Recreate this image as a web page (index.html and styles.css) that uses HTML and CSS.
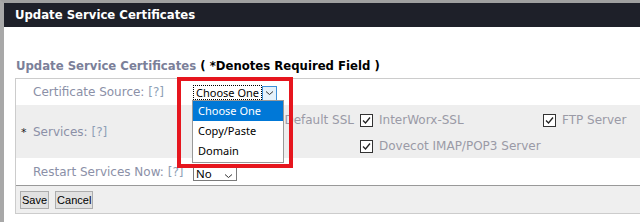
FILE: index.html
```html
<!DOCTYPE html>
<html lang="en">
<head>
    <meta charset="UTF-8">
    <title>Update Service Certificates</title>
    <link rel="stylesheet" href="styles.css">
</head>
<body>
    <div class="frame">
        <div class="titlebar">Update Service Certificates</div>

        <div class="content">
            <h2 class="section-title">Update Service Certificates <span class="note">( *Denotes Required Field )</span></h2>

            <div class="box">
                <div class="form-row row-source">
                    <div class="label">Certificate Source: <span class="help">[?]</span></div>
                    <div class="value">
                        <div class="select-wrap">
                            <div class="select open">
                                <span class="select-text">Choose One</span>
                                <span class="select-arrow">
                                    <svg width="9" height="6" viewBox="0 0 9 6"><path d="M1 1.5 L4.5 4.5 L8 1.5" fill="none" stroke="#333" stroke-width="1"/></svg>
                                </span>
                            </div>
                            <ul class="options">
                                <li class="selected">Choose One</li>
                                <li>Copy/Paste</li>
                                <li>Domain</li>
                            </ul>
                        </div>
                    </div>
                </div>

                <div class="form-row row-services alt">
                    <div class="label"><span class="req">*</span>Services: <span class="help">[?]</span></div>
                    <div class="value">
                        <div class="services">
                            <label class="check first"><span class="box-check"><svg width="11" height="11" viewBox="0 0 11 11"><path d="M2 5.5 L4.5 8 L9 2.5" fill="none" stroke="#222" stroke-width="1.3"/></svg></span>Default SSL</label>
                            <label class="check"><span class="box-check"><svg width="11" height="11" viewBox="0 0 11 11"><path d="M2 5.5 L4.5 8 L9 2.5" fill="none" stroke="#222" stroke-width="1.3"/></svg></span>InterWorx-SSL</label>
                            <label class="check"><span class="box-check"><svg width="11" height="11" viewBox="0 0 11 11"><path d="M2 5.5 L4.5 8 L9 2.5" fill="none" stroke="#222" stroke-width="1.3"/></svg></span>FTP Server</label>
                            <span class="check"></span>
                            <label class="check"><span class="box-check"><svg width="11" height="11" viewBox="0 0 11 11"><path d="M2 5.5 L4.5 8 L9 2.5" fill="none" stroke="#222" stroke-width="1.3"/></svg></span>Dovecot IMAP/POP3 Server</label>
                        </div>
                    </div>
                </div>

                <div class="form-row row-restart">
                    <div class="label">Restart Services Now: <span class="help">[?]</span></div>
                    <div class="value">
                        <div class="select small">
                            <span class="select-text">No</span>
                            <svg width="9" height="6" viewBox="0 0 9 6"><path d="M1 1.5 L4.5 4.5 L8 1.5" fill="none" stroke="#333" stroke-width="1"/></svg>
                        </div>
                    </div>
                </div>

                <div class="actions">
                    <button class="btn">Save</button>
                    <button class="btn">Cancel</button>
                </div>
            </div>
        </div>
    </div>

    <!-- highlight drawn round the open dropdown -->
    <div class="highlight"></div>
</body>
</html>
```

FILE: styles.css
```css
body {
    margin: 0;
    width: 640px;
    height: 222px;
    overflow: hidden;
    background-color: #fff;
    font-family: "DejaVu Sans", Verdana, sans-serif;
    font-size: 12px;
    position: relative;
}
.frame {
    border-top: 3px solid #a0a0a0;
    border-left: 4px solid #a8a8a8;
    height: 219px;
}
.titlebar {
    background-color: #1e2029;
    color: #fff;
    font-weight: bold;
    font-size: 11.7px;
    height: 24px;
    line-height: 24px;
    padding-left: 11px;
}
.content {
    padding-left: 11px;
}
.section-title {
    margin: 31px 0 4px 0;
    padding-left: 1px;
    font-size: 11.7px;
    line-height: 16px;
    color: #7b8099;
}
.section-title .note {
    color: #000;
}
.box {
    border: 1px solid #ccc;
    border-right: none;
}
.form-row {
    display: grid;
    grid-template-columns: 177px 1fr;
    align-items: center;
}
.form-row.alt {
    background-color: #eee;
}
.row-source {
    height: 26px;
}
.row-services {
    height: 53px;
}
.row-restart {
    height: 27px;
}
.label {
    padding-left: 17px;
    color: #8b90a7;
    white-space: nowrap;
}
.help {
    color: #8e9fb6;
}
.req {
    display: inline-block;
    width: 12px;
    margin-left: -12px;
    color: #1a1a1a;
    font-size: 11px;
}
.select-wrap {
    position: relative;
    width: 84px;
    margin-top: 1px;
}
.select {
    display: flex;
    align-items: center;
    background-color: #fff;
    font-family: "Noto Sans", sans-serif;
    font-size: 11px;
    color: #000;
}
.select.open {
    width: 84px;
    height: 15px;
}
.select.open .select-text {
    width: 65px;
    height: 13px;
    line-height: 13px;
    padding-left: 2px;
    border: 1px dotted #000;
    white-space: nowrap;
    overflow: hidden;
}
.select-arrow {
    display: flex;
    align-items: center;
    justify-content: center;
    width: 13px;
    height: 13px;
    margin-top: 1px;
    border: 1px solid #3c8fd9;
    background-color: #e5f1fb;
}
.select.small {
    width: 44px;
    height: 15px;
    border: 1px solid #7a7a7a;
    justify-content: space-between;
    padding-right: 3px;
    box-sizing: border-box;
    margin-top: 4px;
    font-size: 11.5px;
}
.select.small .select-text {
    padding-left: 2px;
    line-height: 13px;
}
.select.small svg {
    margin-top: 4px;
}
.options {
    position: absolute;
    left: -1px;
    top: 15px;
    width: 90px;
    margin: 0;
    padding: 0 0 1px 0;
    list-style: none;
    background-color: #fff;
    border: 1px solid #999;
    font-family: "Noto Sans", sans-serif;
    font-size: 11px;
    z-index: 2;
}
.options li {
    height: 20px;
    line-height: 20px;
    padding-left: 5px;
    color: #000;
}
.options li.selected {
    background-color: #0078d7;
    color: #fff;
}
.services {
    display: grid;
    grid-template-columns: 167px 183px 1fr;
    row-gap: 4px;
    margin-top: 3px;
}
.check {
    display: flex;
    align-items: center;
    height: 22px;
    color: #9a9aa6;
    white-space: nowrap;
}
.check.first {
    justify-content: flex-end;
    padding-right: 6px;
}
.box-check {
    display: flex;
    align-items: center;
    justify-content: center;
    width: 11px;
    height: 11px;
    border: 1px solid #333;
    background-color: #fff;
    margin-right: 6px;
}
.actions {
    border-top: 1px solid #999;
    background-color: #efefef;
    height: 27px;
    padding-left: 4px;
    display: flex;
    align-items: center;
    gap: 6px;
}
.btn {
    font-family: "Liberation Sans", Arial, sans-serif;
    font-size: 11px;
    background-color: #e1e1e1;
    border: 1px solid #adadad;
    padding: 1px 1px;
    height: 18px;
    margin: 0;
    color: #000;
}
.highlight {
    position: absolute;
    left: 177px;
    top: 77px;
    width: 116px;
    height: 91px;
    box-sizing: border-box;
    border: 4px solid #e6161e;
    z-index: 3;
}
```
